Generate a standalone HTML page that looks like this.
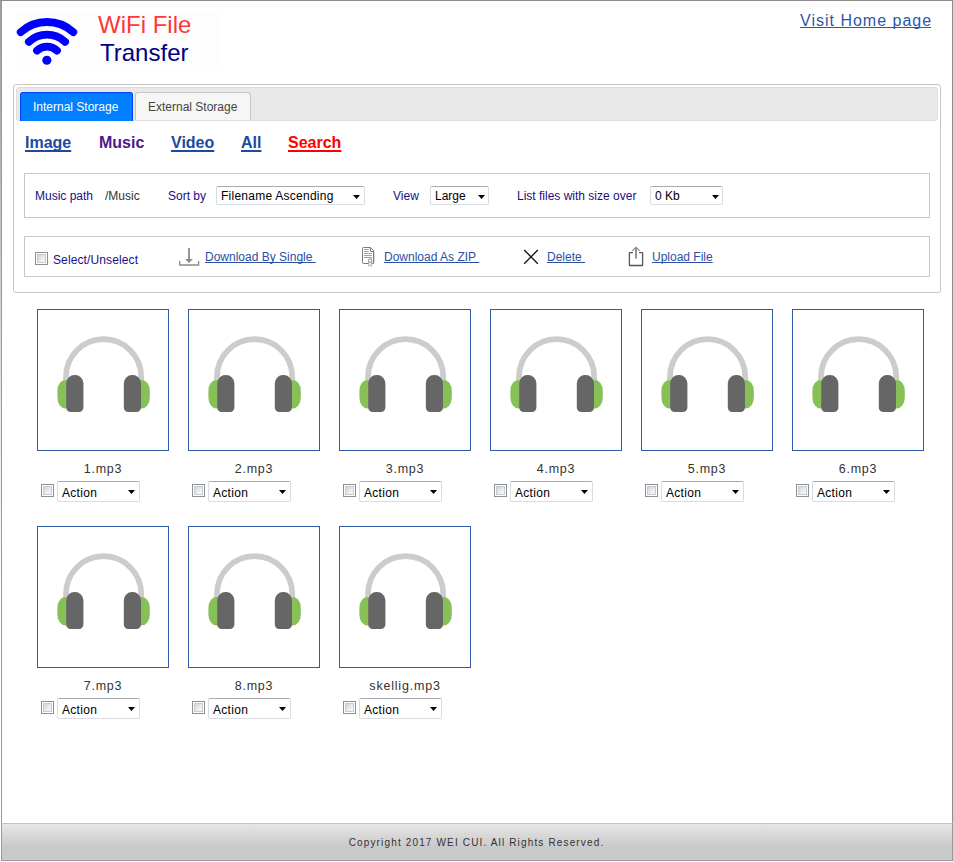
<!DOCTYPE html>
<html><head><meta charset="utf-8">
<style>
*{margin:0;padding:0;box-sizing:border-box}
html,body{width:953px;height:862px;overflow:hidden;background:#fff;font-family:"Liberation Sans",sans-serif}
.a{position:absolute}
.t{position:absolute;white-space:nowrap;line-height:1}
#edge0{left:0;top:0;width:1px;height:862px;background:linear-gradient(#9e9e9e 0px,#aaa 100px,#e6e6e6 400px,#fff 600px)}
#edgeL{left:1px;top:0;width:1px;height:861px;background:#999}
#edgeT{left:0;top:0;width:953px;height:1px;background:#8c8c8c}
#edgeR{left:952px;top:0;width:1px;height:861px;background:#8f8f8f}
#footer{left:1px;top:823px;width:952px;height:38px;border:1px solid #999;border-top:1px solid #c4c4c4;background:linear-gradient(#e6e6e6,#c9c9c9 65%,#c9c9c9 94%,#d0d0d0)}
#logo{left:15px;top:11px;width:203px;height:59px;background:#fdfdfd}
.sel{position:absolute;border:1px solid #d9dde3;border-top-color:#a9abb0;border-radius:2px;background:#fff}
.arr{position:absolute;width:7px;height:4px;background:#000;clip-path:polygon(0 0,100% 0,50% 100%)}
.cb{position:absolute;width:13px;height:13px;border:1px solid #8e8f8f;background:#fff}
.cb::after{content:"";position:absolute;left:1px;top:1px;width:9px;height:9px;box-sizing:border-box;border:1px solid #c6cad1;background:linear-gradient(135deg,#cfd3db,#eceef0 60%,#f6f6f6)}
.card{position:absolute;width:132px;height:142px;border:1px solid #2e5aa6;background:#fff}
.lnk{color:#1d4a9e;text-decoration:underline;text-decoration-skip-ink:none;text-underline-offset:2px;text-decoration-thickness:2px}
.lnk2{color:#2b50a3;text-decoration:underline;text-underline-offset:1px;text-decoration-skip-ink:none}
.nv{color:#16108a}
.lab{font-size:12.5px;letter-spacing:0.8px;color:#333}
.act{font-size:12px;letter-spacing:0.3px;color:#000}
.sel .t{color:#000}
</style></head><body>
<div class="a" id="edge0"></div>
<div class="a" id="edgeT"></div>
<div class="a" id="edgeL"></div>
<div class="a" id="edgeR"></div>

<div class="a" id="logo"></div>
<svg class="a" style="left:0;top:0" width="100" height="80">
 <g fill="none" stroke="#0000ff" stroke-width="7.8" stroke-linecap="round">
  <path d="M20.7 32.1 A39.3 39.3 0 0 1 73.3 32.1"/>
  <path d="M28.86 41.85 A26.6 26.6 0 0 1 65.14 41.85"/>
  <path d="M37.01 50.59 A14.65 14.65 0 0 1 56.99 50.59"/>
 </g>
 <circle cx="46.85" cy="60.25" r="4.55" fill="#0000ff"/>
</svg>
<div class="t" id="wifi" style="left:98px;top:13px;font-size:24px;color:#ff3838">WiFi File</div>
<div class="t" id="transfer" style="left:100px;top:41px;font-size:24px;color:#000080">Transfer</div>
<div class="t lnk" id="visit" style="left:800px;top:13px;font-size:16px;color:#2858a8;letter-spacing:1px;text-decoration-thickness:1px;text-underline-offset:1px">Visit Home pag<span style="letter-spacing:0">e</span></div>

<div class="a" id="panel" style="left:13px;top:84px;width:928px;height:209px;border:1px solid #c5c5c5;border-radius:3px"></div>
<div class="a" id="hdr" style="left:16px;top:87px;width:922px;height:34px;border:1px solid #dddddd;background:#e9e9e9;border-radius:3px"></div>
<div class="a" id="tab1" style="left:20px;top:92px;width:113px;height:29px;border:1px solid #003eff;border-bottom:0;background:#007fff;border-radius:3px 3px 0 0"></div>
<div class="t" id="tab1t" style="left:33px;top:101px;font-size:12px;color:#fff">Internal Storage</div>
<div class="a" id="tab2" style="left:135px;top:92px;width:116px;height:28px;border:1px solid #c5c5c5;border-bottom:0;background:#f6f6f6;border-radius:3px 3px 0 0"></div>
<div class="t" id="tab2t" style="left:148px;top:101px;font-size:12px;color:#454545">External Storage</div>

<div class="t lnk" id="c1" style="left:25px;top:135px;font-size:16px;font-weight:bold">Image</div>
<div class="t" id="c2" style="left:99px;top:135px;font-size:16px;font-weight:bold;color:#4f1689">Music</div>
<div class="t lnk" id="c3" style="left:171px;top:135px;font-size:16px;font-weight:bold">Video</div>
<div class="t lnk" id="c4" style="left:241px;top:135px;font-size:16px;font-weight:bold">All</div>
<div class="t" id="c5" style="left:288px;top:135px;font-size:16px;font-weight:bold;color:#ff0000;text-decoration:underline;text-decoration-skip-ink:none;text-underline-offset:2px;text-decoration-thickness:2px">Search</div>

<div class="a" id="box1" style="left:24px;top:173px;width:906px;height:45px;border:1px solid #c8c8c8"></div>
<div class="t nv" id="mp" style="left:35px;top:190px;font-size:12px">Music path</div>
<div class="t" id="mpv" style="left:105px;top:190px;font-size:12px;color:#333">/Music</div>
<div class="t nv" id="sb" style="left:168px;top:190px;font-size:12px">Sort by</div>
<div class="sel" style="left:216px;top:186px;width:149px;height:19px"><div class="t" style="left:4px;top:3px;font-size:12px;letter-spacing:0.25px">Filename Ascending</div><div class="arr" style="left:136px;top:8px"></div></div>
<div class="t nv" id="vw" style="left:393px;top:190px;font-size:12px">View</div>
<div class="sel" style="left:430px;top:186px;width:59px;height:19px"><div class="t" style="left:4px;top:3px;font-size:12px">Large</div><div class="arr" style="left:47px;top:8px"></div></div>
<div class="t nv" id="lf" style="left:517px;top:190px;font-size:12px">List files with size over</div>
<div class="sel" style="left:650px;top:186px;width:73px;height:19px"><div class="t" style="left:4px;top:3px;font-size:12px">0 Kb</div><div class="arr" style="left:61px;top:8px"></div></div>

<div class="a" id="box2" style="left:24px;top:236px;width:906px;height:41px;border:1px solid #c8c8c8"></div>
<div class="cb" style="left:35px;top:252px"></div>
<div class="t nv" id="su" style="left:53px;top:254px;font-size:12px;letter-spacing:0.12px">Select/Unselect</div>
<svg class="a" style="left:170px;top:240px" width="40" height="30">
 <g fill="none" stroke="#8a8a8a" stroke-width="1.3">
  <path d="M9.7 21 V25 H28.6 V21"/>
 </g>
 <path d="M19 8 V21" stroke="#8a8a8a" stroke-width="1.8"/>
 <path d="M15.2 19 L22.8 19 L19 23 Z" fill="#8a8a8a"/>
</svg>
<div class="t lnk2" id="dbs" style="left:205px;top:251px;font-size:12px">Download By Single&nbsp;</div>
<svg class="a" style="left:350px;top:240px" width="40" height="30">
 <path d="M24.5 11.5 V23.5" stroke="#dcdcdc" stroke-width="1"/>
 <path d="M13.5 7.5 H20.5 L23.5 10.5 V23.5 H13.5 Q12.5 23.5 12.5 22.5 V8.5 Q12.5 7.5 13.5 7.5 Z" fill="#fff" stroke="#7a7a7a" stroke-width="1"/>
 <path d="M20.5 7.5 V11.5 H23.5" fill="none" stroke="#7a7a7a" stroke-width="1"/>
 <g stroke="#a0a0a0" stroke-width="1">
  <path d="M14 9.5 H18.5 M14 11.5 H18.5 M14 13.5 H22 M14 15.5 H22 M14 17.5 H22"/>
 </g>
 <path d="M18.9 22 L18.7 26.2 L20.2 25.2 L21.7 26.2 L21.5 22" fill="#fff" stroke="#aaa" stroke-width="0.9"/>
 <circle cx="20.1" cy="20.6" r="1.8" fill="#fff" stroke="#888" stroke-width="1"/>
</svg>
<div class="t lnk2" id="daz" style="left:384px;top:251px;font-size:12px">Download As ZIP&nbsp;</div>
<svg class="a" style="left:510px;top:240px" width="40" height="30">
 <path d="M14.2 10 L27.8 23.7 M27.8 10 L14.2 23.7" stroke="#111" stroke-width="1.3"/>
</svg>
<div class="t lnk2" id="del" style="left:547px;top:251px;font-size:12px">Delete&nbsp;</div>
<svg class="a" style="left:615px;top:240px" width="40" height="30">
 <path d="M18 12.6 H15 Q14.4 12.6 14.4 13.2 V24.9 Q14.4 25.5 15 25.5 H27 Q27.6 25.5 27.6 24.9 V13.2 Q27.6 12.6 27 12.6 H24.1" fill="none" stroke="#555" stroke-width="1.3"/>
 <path d="M21 8 V18.5" stroke="#888" stroke-width="1.8"/>
 <path d="M17.3 10.8 L21 7.2 L24.7 10.8" fill="none" stroke="#888" stroke-width="1.1"/>
</svg>
<div class="t lnk2" id="upl" style="left:652px;top:251px;font-size:12px">Upload File</div>

<div class="card" style="left:37px;top:309px"><svg class="a" style="left:0;top:0" width="130" height="140" viewBox="0 0 130 140">
<path d="M28 71 V66.75 A37.6 37.6 0 0 1 103.2 66.75 V71" fill="none" stroke="#cccccc" stroke-width="5.7"/>
<rect x="19.4" y="69.9" width="16" height="28.6" rx="8" ry="11" fill="#86c057"/>
<rect x="95.8" y="69.9" width="16" height="28.6" rx="8" ry="11" fill="#86c057"/>
<path d="M36.50 65.00 H37.10 A8.3 8.3 0 0 1 45.40 73.30 V97.60 A4.5 4.5 0 0 1 40.90 102.10 H32.70 A4.5 4.5 0 0 1 28.20 97.60 V73.30 A8.3 8.3 0 0 1 36.50 65.00 Z" fill="#666666"/>
<path d="M94.10 65.00 H94.70 A8.3 8.3 0 0 1 103.00 73.30 V97.60 A4.5 4.5 0 0 1 98.50 102.10 H90.30 A4.5 4.5 0 0 1 85.80 97.60 V73.30 A8.3 8.3 0 0 1 94.10 65.00 Z" fill="#666666"/>
</svg></div>
<div class="t lab" style="left:37px;top:463px;width:132px;text-align:center">1.mp3</div>
<div class="cb" style="left:41px;top:484px"></div>
<div class="sel" style="left:57px;top:481px;width:83px;height:21px"><div class="t act" style="left:4px;top:5px">Action</div><div class="arr" style="left:70px;top:8px"></div></div>
<div class="card" style="left:188px;top:309px"><svg class="a" style="left:0;top:0" width="130" height="140" viewBox="0 0 130 140">
<path d="M28 71 V66.75 A37.6 37.6 0 0 1 103.2 66.75 V71" fill="none" stroke="#cccccc" stroke-width="5.7"/>
<rect x="19.4" y="69.9" width="16" height="28.6" rx="8" ry="11" fill="#86c057"/>
<rect x="95.8" y="69.9" width="16" height="28.6" rx="8" ry="11" fill="#86c057"/>
<path d="M36.50 65.00 H37.10 A8.3 8.3 0 0 1 45.40 73.30 V97.60 A4.5 4.5 0 0 1 40.90 102.10 H32.70 A4.5 4.5 0 0 1 28.20 97.60 V73.30 A8.3 8.3 0 0 1 36.50 65.00 Z" fill="#666666"/>
<path d="M94.10 65.00 H94.70 A8.3 8.3 0 0 1 103.00 73.30 V97.60 A4.5 4.5 0 0 1 98.50 102.10 H90.30 A4.5 4.5 0 0 1 85.80 97.60 V73.30 A8.3 8.3 0 0 1 94.10 65.00 Z" fill="#666666"/>
</svg></div>
<div class="t lab" style="left:188px;top:463px;width:132px;text-align:center">2.mp3</div>
<div class="cb" style="left:192px;top:484px"></div>
<div class="sel" style="left:208px;top:481px;width:83px;height:21px"><div class="t act" style="left:4px;top:5px">Action</div><div class="arr" style="left:70px;top:8px"></div></div>
<div class="card" style="left:339px;top:309px"><svg class="a" style="left:0;top:0" width="130" height="140" viewBox="0 0 130 140">
<path d="M28 71 V66.75 A37.6 37.6 0 0 1 103.2 66.75 V71" fill="none" stroke="#cccccc" stroke-width="5.7"/>
<rect x="19.4" y="69.9" width="16" height="28.6" rx="8" ry="11" fill="#86c057"/>
<rect x="95.8" y="69.9" width="16" height="28.6" rx="8" ry="11" fill="#86c057"/>
<path d="M36.50 65.00 H37.10 A8.3 8.3 0 0 1 45.40 73.30 V97.60 A4.5 4.5 0 0 1 40.90 102.10 H32.70 A4.5 4.5 0 0 1 28.20 97.60 V73.30 A8.3 8.3 0 0 1 36.50 65.00 Z" fill="#666666"/>
<path d="M94.10 65.00 H94.70 A8.3 8.3 0 0 1 103.00 73.30 V97.60 A4.5 4.5 0 0 1 98.50 102.10 H90.30 A4.5 4.5 0 0 1 85.80 97.60 V73.30 A8.3 8.3 0 0 1 94.10 65.00 Z" fill="#666666"/>
</svg></div>
<div class="t lab" style="left:339px;top:463px;width:132px;text-align:center">3.mp3</div>
<div class="cb" style="left:343px;top:484px"></div>
<div class="sel" style="left:359px;top:481px;width:83px;height:21px"><div class="t act" style="left:4px;top:5px">Action</div><div class="arr" style="left:70px;top:8px"></div></div>
<div class="card" style="left:490px;top:309px"><svg class="a" style="left:0;top:0" width="130" height="140" viewBox="0 0 130 140">
<path d="M28 71 V66.75 A37.6 37.6 0 0 1 103.2 66.75 V71" fill="none" stroke="#cccccc" stroke-width="5.7"/>
<rect x="19.4" y="69.9" width="16" height="28.6" rx="8" ry="11" fill="#86c057"/>
<rect x="95.8" y="69.9" width="16" height="28.6" rx="8" ry="11" fill="#86c057"/>
<path d="M36.50 65.00 H37.10 A8.3 8.3 0 0 1 45.40 73.30 V97.60 A4.5 4.5 0 0 1 40.90 102.10 H32.70 A4.5 4.5 0 0 1 28.20 97.60 V73.30 A8.3 8.3 0 0 1 36.50 65.00 Z" fill="#666666"/>
<path d="M94.10 65.00 H94.70 A8.3 8.3 0 0 1 103.00 73.30 V97.60 A4.5 4.5 0 0 1 98.50 102.10 H90.30 A4.5 4.5 0 0 1 85.80 97.60 V73.30 A8.3 8.3 0 0 1 94.10 65.00 Z" fill="#666666"/>
</svg></div>
<div class="t lab" style="left:490px;top:463px;width:132px;text-align:center">4.mp3</div>
<div class="cb" style="left:494px;top:484px"></div>
<div class="sel" style="left:510px;top:481px;width:83px;height:21px"><div class="t act" style="left:4px;top:5px">Action</div><div class="arr" style="left:70px;top:8px"></div></div>
<div class="card" style="left:641px;top:309px"><svg class="a" style="left:0;top:0" width="130" height="140" viewBox="0 0 130 140">
<path d="M28 71 V66.75 A37.6 37.6 0 0 1 103.2 66.75 V71" fill="none" stroke="#cccccc" stroke-width="5.7"/>
<rect x="19.4" y="69.9" width="16" height="28.6" rx="8" ry="11" fill="#86c057"/>
<rect x="95.8" y="69.9" width="16" height="28.6" rx="8" ry="11" fill="#86c057"/>
<path d="M36.50 65.00 H37.10 A8.3 8.3 0 0 1 45.40 73.30 V97.60 A4.5 4.5 0 0 1 40.90 102.10 H32.70 A4.5 4.5 0 0 1 28.20 97.60 V73.30 A8.3 8.3 0 0 1 36.50 65.00 Z" fill="#666666"/>
<path d="M94.10 65.00 H94.70 A8.3 8.3 0 0 1 103.00 73.30 V97.60 A4.5 4.5 0 0 1 98.50 102.10 H90.30 A4.5 4.5 0 0 1 85.80 97.60 V73.30 A8.3 8.3 0 0 1 94.10 65.00 Z" fill="#666666"/>
</svg></div>
<div class="t lab" style="left:641px;top:463px;width:132px;text-align:center">5.mp3</div>
<div class="cb" style="left:645px;top:484px"></div>
<div class="sel" style="left:661px;top:481px;width:83px;height:21px"><div class="t act" style="left:4px;top:5px">Action</div><div class="arr" style="left:70px;top:8px"></div></div>
<div class="card" style="left:792px;top:309px"><svg class="a" style="left:0;top:0" width="130" height="140" viewBox="0 0 130 140">
<path d="M28 71 V66.75 A37.6 37.6 0 0 1 103.2 66.75 V71" fill="none" stroke="#cccccc" stroke-width="5.7"/>
<rect x="19.4" y="69.9" width="16" height="28.6" rx="8" ry="11" fill="#86c057"/>
<rect x="95.8" y="69.9" width="16" height="28.6" rx="8" ry="11" fill="#86c057"/>
<path d="M36.50 65.00 H37.10 A8.3 8.3 0 0 1 45.40 73.30 V97.60 A4.5 4.5 0 0 1 40.90 102.10 H32.70 A4.5 4.5 0 0 1 28.20 97.60 V73.30 A8.3 8.3 0 0 1 36.50 65.00 Z" fill="#666666"/>
<path d="M94.10 65.00 H94.70 A8.3 8.3 0 0 1 103.00 73.30 V97.60 A4.5 4.5 0 0 1 98.50 102.10 H90.30 A4.5 4.5 0 0 1 85.80 97.60 V73.30 A8.3 8.3 0 0 1 94.10 65.00 Z" fill="#666666"/>
</svg></div>
<div class="t lab" style="left:792px;top:463px;width:132px;text-align:center">6.mp3</div>
<div class="cb" style="left:796px;top:484px"></div>
<div class="sel" style="left:812px;top:481px;width:83px;height:21px"><div class="t act" style="left:4px;top:5px">Action</div><div class="arr" style="left:70px;top:8px"></div></div>
<div class="card" style="left:37px;top:526px"><svg class="a" style="left:0;top:0" width="130" height="140" viewBox="0 0 130 140">
<path d="M28 71 V66.75 A37.6 37.6 0 0 1 103.2 66.75 V71" fill="none" stroke="#cccccc" stroke-width="5.7"/>
<rect x="19.4" y="69.9" width="16" height="28.6" rx="8" ry="11" fill="#86c057"/>
<rect x="95.8" y="69.9" width="16" height="28.6" rx="8" ry="11" fill="#86c057"/>
<path d="M36.50 65.00 H37.10 A8.3 8.3 0 0 1 45.40 73.30 V97.60 A4.5 4.5 0 0 1 40.90 102.10 H32.70 A4.5 4.5 0 0 1 28.20 97.60 V73.30 A8.3 8.3 0 0 1 36.50 65.00 Z" fill="#666666"/>
<path d="M94.10 65.00 H94.70 A8.3 8.3 0 0 1 103.00 73.30 V97.60 A4.5 4.5 0 0 1 98.50 102.10 H90.30 A4.5 4.5 0 0 1 85.80 97.60 V73.30 A8.3 8.3 0 0 1 94.10 65.00 Z" fill="#666666"/>
</svg></div>
<div class="t lab" style="left:37px;top:680px;width:132px;text-align:center">7.mp3</div>
<div class="cb" style="left:41px;top:701px"></div>
<div class="sel" style="left:57px;top:698px;width:83px;height:21px"><div class="t act" style="left:4px;top:5px">Action</div><div class="arr" style="left:70px;top:8px"></div></div>
<div class="card" style="left:188px;top:526px"><svg class="a" style="left:0;top:0" width="130" height="140" viewBox="0 0 130 140">
<path d="M28 71 V66.75 A37.6 37.6 0 0 1 103.2 66.75 V71" fill="none" stroke="#cccccc" stroke-width="5.7"/>
<rect x="19.4" y="69.9" width="16" height="28.6" rx="8" ry="11" fill="#86c057"/>
<rect x="95.8" y="69.9" width="16" height="28.6" rx="8" ry="11" fill="#86c057"/>
<path d="M36.50 65.00 H37.10 A8.3 8.3 0 0 1 45.40 73.30 V97.60 A4.5 4.5 0 0 1 40.90 102.10 H32.70 A4.5 4.5 0 0 1 28.20 97.60 V73.30 A8.3 8.3 0 0 1 36.50 65.00 Z" fill="#666666"/>
<path d="M94.10 65.00 H94.70 A8.3 8.3 0 0 1 103.00 73.30 V97.60 A4.5 4.5 0 0 1 98.50 102.10 H90.30 A4.5 4.5 0 0 1 85.80 97.60 V73.30 A8.3 8.3 0 0 1 94.10 65.00 Z" fill="#666666"/>
</svg></div>
<div class="t lab" style="left:188px;top:680px;width:132px;text-align:center">8.mp3</div>
<div class="cb" style="left:192px;top:701px"></div>
<div class="sel" style="left:208px;top:698px;width:83px;height:21px"><div class="t act" style="left:4px;top:5px">Action</div><div class="arr" style="left:70px;top:8px"></div></div>
<div class="card" style="left:339px;top:526px"><svg class="a" style="left:0;top:0" width="130" height="140" viewBox="0 0 130 140">
<path d="M28 71 V66.75 A37.6 37.6 0 0 1 103.2 66.75 V71" fill="none" stroke="#cccccc" stroke-width="5.7"/>
<rect x="19.4" y="69.9" width="16" height="28.6" rx="8" ry="11" fill="#86c057"/>
<rect x="95.8" y="69.9" width="16" height="28.6" rx="8" ry="11" fill="#86c057"/>
<path d="M36.50 65.00 H37.10 A8.3 8.3 0 0 1 45.40 73.30 V97.60 A4.5 4.5 0 0 1 40.90 102.10 H32.70 A4.5 4.5 0 0 1 28.20 97.60 V73.30 A8.3 8.3 0 0 1 36.50 65.00 Z" fill="#666666"/>
<path d="M94.10 65.00 H94.70 A8.3 8.3 0 0 1 103.00 73.30 V97.60 A4.5 4.5 0 0 1 98.50 102.10 H90.30 A4.5 4.5 0 0 1 85.80 97.60 V73.30 A8.3 8.3 0 0 1 94.10 65.00 Z" fill="#666666"/>
</svg></div>
<div class="t lab" style="left:339px;top:680px;width:132px;text-align:center">skellig.mp3</div>
<div class="cb" style="left:343px;top:701px"></div>
<div class="sel" style="left:359px;top:698px;width:83px;height:21px"><div class="t act" style="left:4px;top:5px">Action</div><div class="arr" style="left:70px;top:8px"></div></div>

<div class="a" id="footer"></div>
<div class="t" id="copy" style="left:0;top:838px;width:953px;text-align:center;font-size:10px;letter-spacing:1.15px;color:#333">Copyright 2017 WEI CUI. All Rights Reserved.</div>
</body></html>
